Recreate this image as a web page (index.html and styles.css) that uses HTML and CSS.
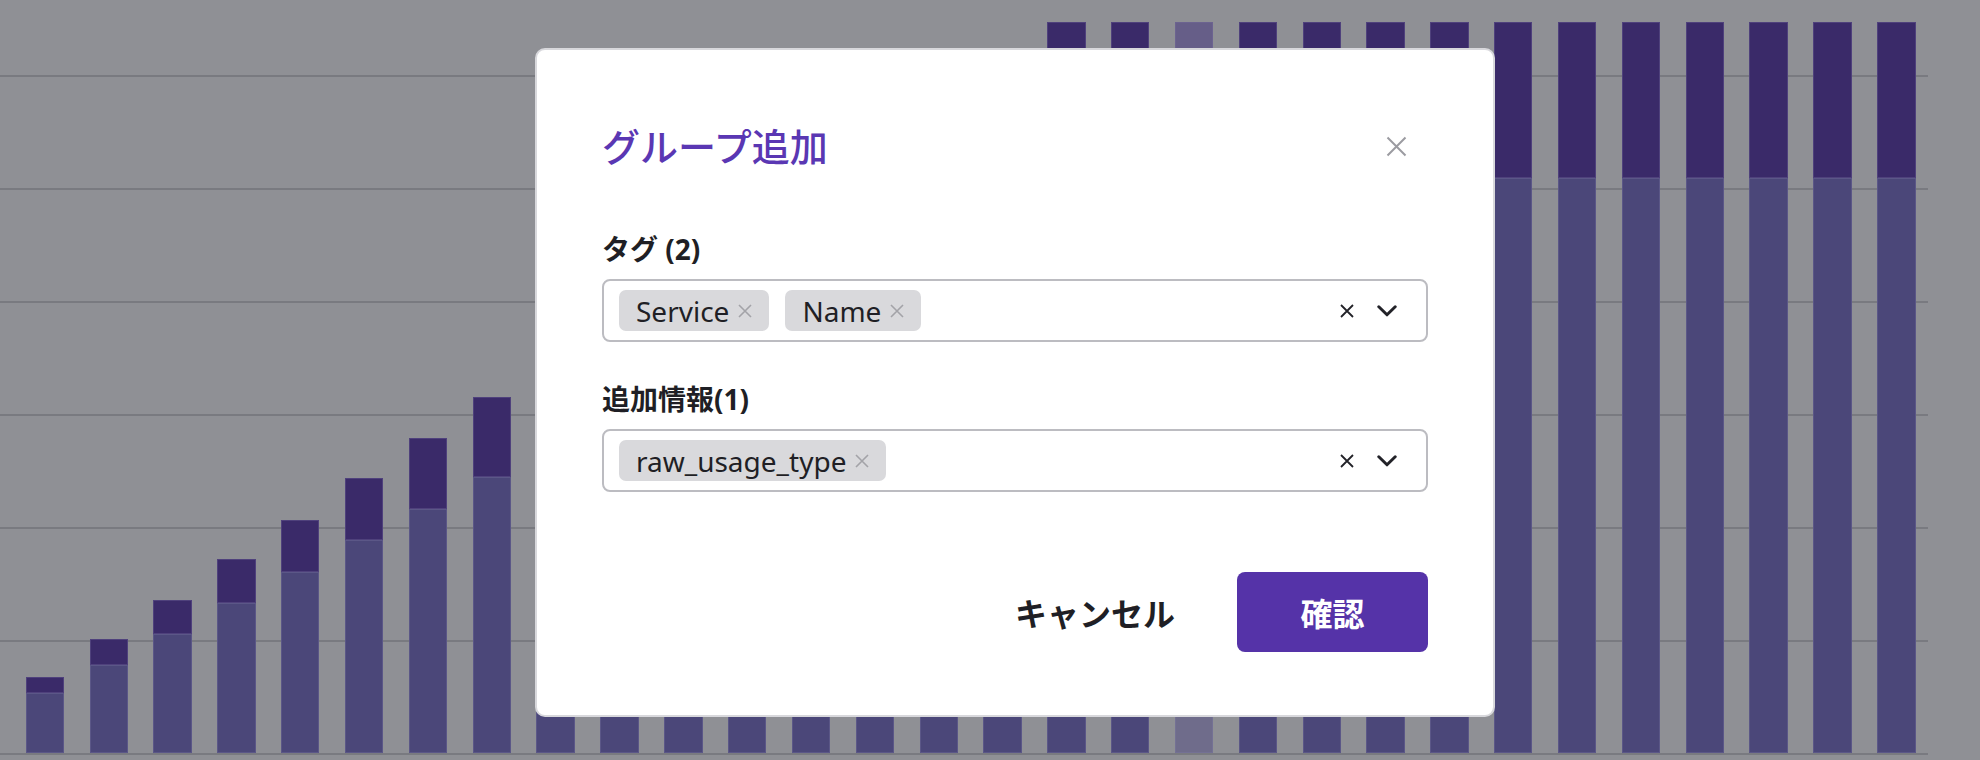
FILE: index.html
```html
<!DOCTYPE html>
<html lang="ja">
<head>
<meta charset="utf-8">
<title>グループ追加</title>
<link rel="stylesheet" href="styles.css">
</head>
<body>
<div class="screen">
  <div class="chart">
    <div class="bar" style="height:76px"><div class="seg seg-top" style="height:16px"></div><div class="seg seg-base"></div></div>
    <div class="bar" style="height:114px"><div class="seg seg-top" style="height:26px"></div><div class="seg seg-base"></div></div>
    <div class="bar" style="height:153px"><div class="seg seg-top" style="height:34px"></div><div class="seg seg-base"></div></div>
    <div class="bar" style="height:194px"><div class="seg seg-top" style="height:44px"></div><div class="seg seg-base"></div></div>
    <div class="bar" style="height:233px"><div class="seg seg-top" style="height:52px"></div><div class="seg seg-base"></div></div>
    <div class="bar" style="height:275px"><div class="seg seg-top" style="height:62px"></div><div class="seg seg-base"></div></div>
    <div class="bar" style="height:315px"><div class="seg seg-top" style="height:71px"></div><div class="seg seg-base"></div></div>
    <div class="bar" style="height:356px"><div class="seg seg-top" style="height:80px"></div><div class="seg seg-base"></div></div>
    <div class="bar" style="height:396px"><div class="seg seg-top" style="height:89px"></div><div class="seg seg-base"></div></div>
    <div class="bar" style="height:437px"><div class="seg seg-top" style="height:98px"></div><div class="seg seg-base"></div></div>
    <div class="bar" style="height:477px"><div class="seg seg-top" style="height:107px"></div><div class="seg seg-base"></div></div>
    <div class="bar" style="height:518px"><div class="seg seg-top" style="height:116px"></div><div class="seg seg-base"></div></div>
    <div class="bar" style="height:558px"><div class="seg seg-top" style="height:125px"></div><div class="seg seg-base"></div></div>
    <div class="bar" style="height:599px"><div class="seg seg-top" style="height:134px"></div><div class="seg seg-base"></div></div>
    <div class="bar" style="height:639px"><div class="seg seg-top" style="height:143px"></div><div class="seg seg-base"></div></div>
    <div class="bar" style="height:680px"><div class="seg seg-top" style="height:152px"></div><div class="seg seg-base"></div></div>
    <div class="bar" style="height:731px"><div class="seg seg-top" style="height:156px"></div><div class="seg seg-base"></div></div>
    <div class="bar" style="height:731px"><div class="seg seg-top" style="height:156px"></div><div class="seg seg-base"></div></div>
    <div class="bar bar-active" style="height:731px"><div class="seg seg-top" style="height:156px"></div><div class="seg seg-base"></div></div>
    <div class="bar" style="height:731px"><div class="seg seg-top" style="height:156px"></div><div class="seg seg-base"></div></div>
    <div class="bar" style="height:731px"><div class="seg seg-top" style="height:156px"></div><div class="seg seg-base"></div></div>
    <div class="bar" style="height:731px"><div class="seg seg-top" style="height:156px"></div><div class="seg seg-base"></div></div>
    <div class="bar" style="height:731px"><div class="seg seg-top" style="height:156px"></div><div class="seg seg-base"></div></div>
    <div class="bar" style="height:731px"><div class="seg seg-top" style="height:156px"></div><div class="seg seg-base"></div></div>
    <div class="bar" style="height:731px"><div class="seg seg-top" style="height:156px"></div><div class="seg seg-base"></div></div>
    <div class="bar" style="height:731px"><div class="seg seg-top" style="height:156px"></div><div class="seg seg-base"></div></div>
    <div class="bar" style="height:731px"><div class="seg seg-top" style="height:156px"></div><div class="seg seg-base"></div></div>
    <div class="bar" style="height:731px"><div class="seg seg-top" style="height:156px"></div><div class="seg seg-base"></div></div>
    <div class="bar" style="height:731px"><div class="seg seg-top" style="height:156px"></div><div class="seg seg-base"></div></div>
    <div class="bar" style="height:731px"><div class="seg seg-top" style="height:156px"></div><div class="seg seg-base"></div></div>
  </div>

  <div class="modal" role="dialog">
    <div class="modal-header">
      <h2 class="modal-title">グループ追加</h2>
      <button class="close-btn" type="button" aria-label="閉じる">
        <svg width="21" height="21" viewBox="0 0 21 21"><path d="M1.5 1.5 L19.5 19.5 M19.5 1.5 L1.5 19.5" stroke="#9b9ba1" stroke-width="2" fill="none"/></svg>
      </button>
    </div>

    <div class="field">
      <div class="field-label">タグ (2)</div>
      <div class="select">
        <div class="chips">
          <span class="chip">Service<svg class="chip-x" width="14" height="14" viewBox="0 0 14 14"><path d="M1 1 L13 13 M13 1 L1 13" stroke="#a3a3a8" stroke-width="1.6" fill="none"/></svg></span>
          <span class="chip">Name<svg class="chip-x" width="14" height="14" viewBox="0 0 14 14"><path d="M1 1 L13 13 M13 1 L1 13" stroke="#a3a3a8" stroke-width="1.6" fill="none"/></svg></span>
        </div>
        <div class="select-icons">
          <svg width="14" height="14" viewBox="0 0 14 14"><path d="M1 1 L13 13 M13 1 L1 13" stroke="#222228" stroke-width="1.8" fill="none"/></svg>
          <svg width="20" height="12" viewBox="0 0 20 12"><path d="M1.8 1.8 L10 9.8 L18.2 1.8" stroke="#222228" stroke-width="3" fill="none" stroke-linecap="round" stroke-linejoin="round"/></svg>
        </div>
      </div>
    </div>

    <div class="field field-next">
      <div class="field-label">追加情報(1)</div>
      <div class="select">
        <div class="chips">
          <span class="chip">raw_usage_type<svg class="chip-x" width="14" height="14" viewBox="0 0 14 14"><path d="M1 1 L13 13 M13 1 L1 13" stroke="#a3a3a8" stroke-width="1.6" fill="none"/></svg></span>
        </div>
        <div class="select-icons">
          <svg width="14" height="14" viewBox="0 0 14 14"><path d="M1 1 L13 13 M13 1 L1 13" stroke="#222228" stroke-width="1.8" fill="none"/></svg>
          <svg width="20" height="12" viewBox="0 0 20 12"><path d="M1.8 1.8 L10 9.8 L18.2 1.8" stroke="#222228" stroke-width="3" fill="none" stroke-linecap="round" stroke-linejoin="round"/></svg>
        </div>
      </div>
    </div>

    <div class="actions">
      <button class="btn-cancel" type="button">キャンセル</button>
      <button class="btn-primary" type="button">確認</button>
    </div>
  </div>
</div>
</body>
</html>
```

FILE: styles.css
```css
* { box-sizing: border-box; }

html, body {
  margin: 0;
  padding: 0;
}

body {
  width: 1980px;
  height: 760px;
  overflow: hidden;
  background: #8f9095;
  font-family: "Noto Sans", "Noto Sans CJK JP", sans-serif;
  color: #1f1f25;
}

.screen {
  position: relative;
  width: 1980px;
  height: 760px;
}

.chart {
  width: 1928px;
  height: 755px;
  display: flex;
  align-items: flex-end;
  gap: 25.46px;
  padding-left: 25.7px;
  padding-bottom: 2px;
  background-image: linear-gradient(to top, #797a80 0, #797a80 2px, transparent 2px);
  background-size: 100% 113px;
  background-position: 0 100%;
  background-repeat: repeat-y;
}

.bar {
  width: 38.4px;
  flex: none;
  display: flex;
  flex-direction: column;
}

.seg { width: 100%; }
.seg-top {
  background: #3a2a69;
  box-shadow: inset 0 0 0 1px rgba(120, 110, 160, 0.35);
}
.seg-base {
  flex: 1;
  background: #4b4779;
  box-shadow: inset 0 0 0 1px rgba(130, 125, 170, 0.3);
}
.bar-active .seg-top { background: #665e88; }
.bar-active .seg-base { background: #6f6c8b; }

.modal {
  position: absolute;
  left: 535px;
  top: 48px;
  width: 960px;
  background: #ffffff;
  border: 2px solid #d8d8dc;
  border-radius: 10px;
  padding: 64px 65px 63px 65px;
}

.modal-header {
  height: 64px;
  display: flex;
  align-items: center;
  justify-content: space-between;
}

.modal-title {
  margin: 0;
  font-size: 38px;
  font-weight: 500;
  line-height: 52px;
  color: #5a37b3;
}

.close-btn {
  width: 21px;
  height: 21px;
  margin-right: 21px;
  padding: 0;
  border: 0;
  background: none;
  display: flex;
}

.field { margin-top: 51px; }
.field-next { margin-top: 37px; }

.field-label {
  font-size: 28px;
  font-weight: 700;
  line-height: 40px;
  margin-bottom: 10px;
  color: #1f1f25;
}

.select {
  height: 63px;
  border: 2px solid #bcbcc1;
  border-radius: 8px;
  padding-left: 15px;
  display: flex;
  align-items: center;
  justify-content: space-between;
}

.chips {
  display: flex;
  gap: 16px;
}

.chip {
  height: 41px;
  padding: 0 17px;
  background: #d9d9dc;
  border-radius: 7px;
  display: flex;
  align-items: center;
  gap: 9px;
  font-size: 28px;
  color: #1f1f25;
  line-height: 1;
}

.chip-x { flex: none; }

.select-icons {
  display: flex;
  align-items: center;
  gap: 23px;
  padding-right: 29px;
}

.actions {
  margin-top: 80px;
  display: flex;
  justify-content: flex-end;
  align-items: center;
  gap: 62px;
}

.btn-cancel {
  padding: 0;
  border: 0;
  background: none;
  font-family: inherit;
  font-size: 32px;
  font-weight: 700;
  color: #1f1f25;
}

.btn-primary {
  width: 191px;
  height: 80px;
  border: 0;
  border-radius: 8px;
  background: #5533a8;
  color: #ffffff;
  font-family: inherit;
  font-size: 32px;
  font-weight: 700;
}
```
